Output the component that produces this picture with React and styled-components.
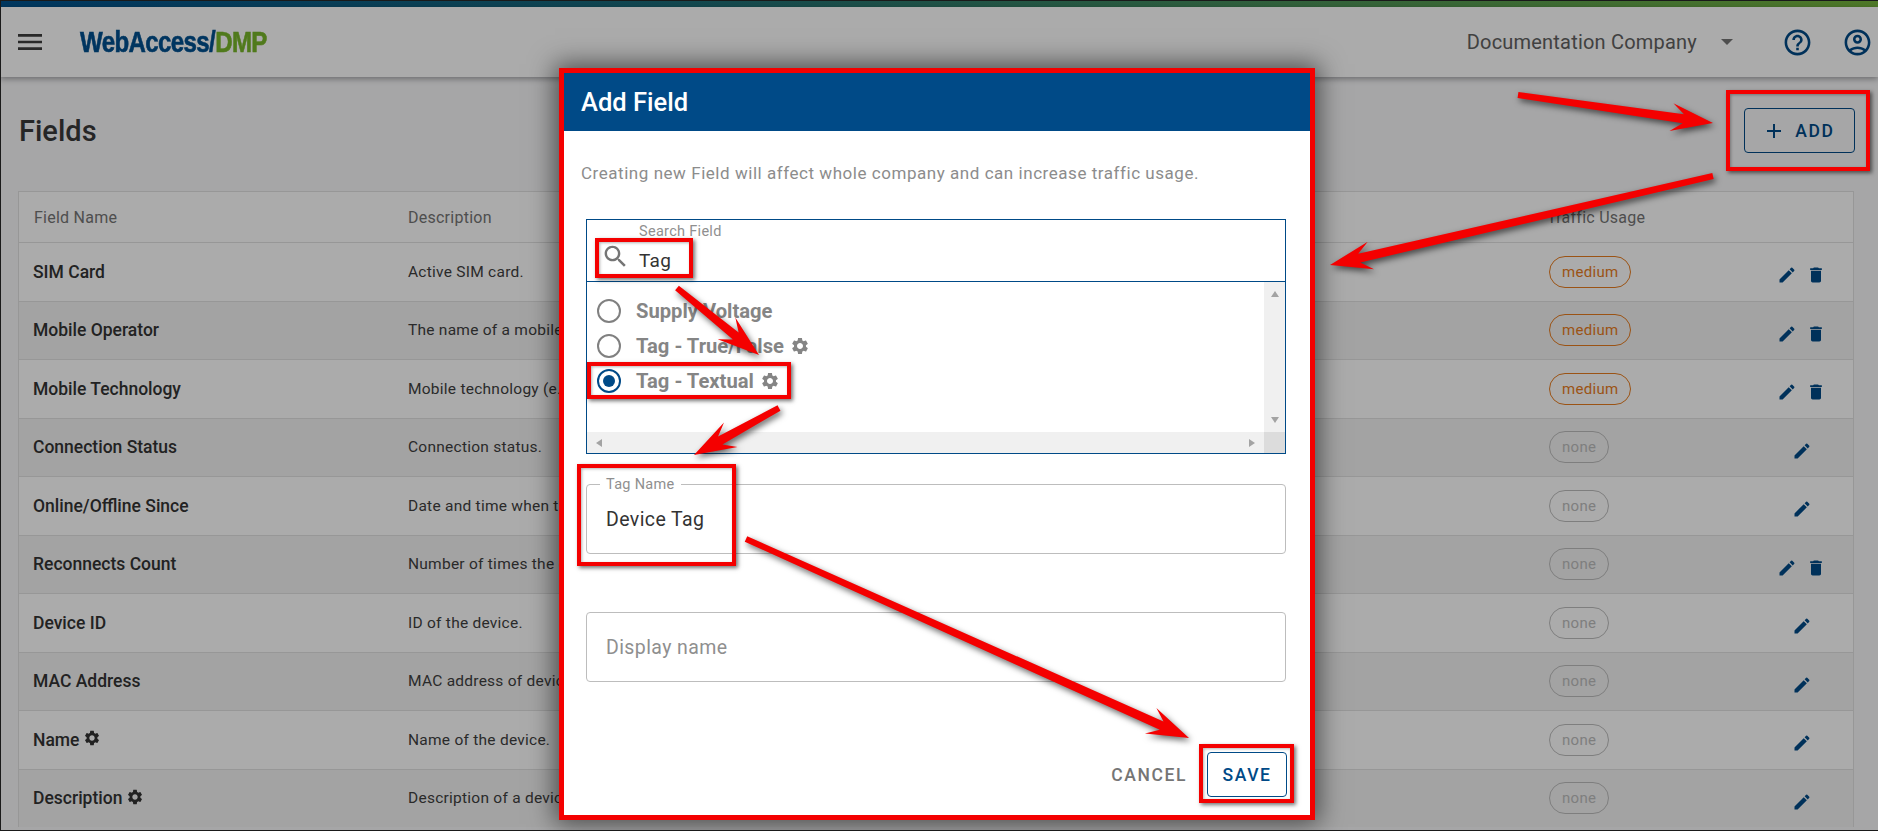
import React from 'react';
import styled, { createGlobalStyle } from 'styled-components';

const Global = createGlobalStyle`
  html, body { margin: 0; padding: 0; background: #f8f8fa; overflow: hidden; }
  * { box-sizing: border-box; }
  body { font-family: Roboto, "Noto Sans", sans-serif; color: #3d3d3d; }
`;

const BLUE = '#004a87';

const Page = styled.div`
  position: relative; width: 1878px; height: 831px; overflow: hidden;
  display: flex; flex-direction: column; background: #f8f8fa;
`;
const Stripe = styled.div`
  height: 7px; flex: none; background: linear-gradient(90deg, #00528f 0%, #1a6a78 35%, #76b53c 100%);
`;
const TopBar = styled.header`
  height: 70px; flex: none; background: #fff; display: flex; align-items: center;
  padding: 0 5.5px 0 14px; box-shadow: 0 2px 6px rgba(0,0,0,.35); position: relative; z-index: 1;
`;
const LogoSlot = styled.div`
  margin-left: 34px; flex: 1;
`;
const Logo = styled.div`
  display: inline-block; transform: scaleX(.83); transform-origin: left center;
  font-family: "Liberation Sans", sans-serif; font-weight: 700; font-size: 29px; letter-spacing: -0.75px;
  color: #00508f; -webkit-text-stroke: .6px currentColor;
  span { color: #78b62a; }
`;
const Company = styled.div`
  font-size: 20px; letter-spacing: .2px; color: #616161;
`;
const Caret = styled.div`
  width: 0; height: 0; margin: 0 48.5px 0 24px; border-left: 6px solid transparent; border-right: 6px solid transparent; border-top: 6px solid #757575;
`;
const IconGroup = styled.div`
  display: flex; gap: 29px; align-items: center; color: ${BLUE};
`;
const Main = styled.main`
  flex: 1; padding: 0 24px 0 18px; min-height: 0;
`;
const TitleRow = styled.div`
  height: 114px; display: flex; align-items: center; justify-content: space-between; padding-bottom: 7px;
`;
const Title = styled.h1`
  margin: 0 0 0 1px; font-size: 29px; font-weight: 500; color: #3a3a3a;
`;
const AddButton = styled.button`
  width: 111px; height: 45px; margin-right: -1px; border: 1px solid ${BLUE}; border-radius: 4px; background: transparent;
  color: ${BLUE}; font: 500 17.5px Roboto, sans-serif; letter-spacing: 1.6px;
  display: flex; align-items: center; justify-content: center; gap: 9px; padding: 0 2px 0 0;
`;
const Table = styled.div`
  border: 1px solid #e2e2e2; border-bottom: none; background: #fff;
`;
const HeadRow = styled.div`
  display: grid; grid-template-columns: 374px 1141px 214px 1fr; align-items: center; height: 50px;
  font-size: 16px; letter-spacing: .25px; color: #757575;
  & > div { padding-left: 15px; }
  & > div:nth-child(3) { padding-left: 13px; }
`;
const Row = styled.div`
  display: grid; grid-template-columns: 374px 1141px 214px 1fr; align-items: center; height: 58.5px;
  border-top: 1px solid #e2e2e2; background: ${p => (p.$alt ? '#f3f3f3' : '#fff')};
  & > div { padding-left: 15px; }
`;
const NameCell = styled.div`
  && { padding-left: 14px; }
  font-size: 17.5px; font-weight: 500; color: #333; display: flex; align-items: center; gap: 4px;
  svg { margin-top: -3px; }
`;
const DescCell = styled.div`
  font-size: 15.5px; letter-spacing: .25px; color: #3f3f3f; white-space: nowrap;
`;
const Chip = styled.span`
  display: inline-flex; align-items: center; justify-content: center; height: 32px; border-radius: 16px;
  padding: 0 12px; font-size: 15px; letter-spacing: .3px;
  border: 1px solid ${p => (p.$tone === 'medium' ? '#e87c1e' : '#bdbdbd')};
  color: ${p => (p.$tone === 'medium' ? '#e87c1e' : '#bdbdbd')};
`;
const Actions = styled.div`
  && { padding-left: 2px; } display: flex; align-items: center; justify-content: center; gap: 9px; color: #004a87; padding-top: 7px;
`;
const Backdrop = styled.div`
  position: absolute; inset: 0; background: rgba(0,0,0,.33); z-index: 2;
`;
const Modal = styled.section`
  position: absolute; left: 559px; top: 68px; width: 756px; height: 752px; z-index: 3;
  border: 5px solid #f40000; background: #fff; display: flex; flex-direction: column;
  box-shadow: 0 0 24px 4px rgba(0,0,0,.55);
`;
const ModalHead = styled.div`
  height: 58px; flex: none; background: ${BLUE}; color: #fff; display: flex; align-items: center;
  padding-left: 17px; font-size: 25.5px; font-weight: 500;
`;
const ModalBody = styled.div`
  padding: 0 24px 0 17px; display: flex; flex-direction: column;
`;
const Note = styled.p`
  margin: 30px 0 0; font-size: 17px; line-height: 24px; letter-spacing: .54px; color: #8c8c8c;
`;
const Form = styled.div`
  margin: 34px 0 0 5px; display: flex; flex-direction: column;
`;
const ListBox = styled.div`
  height: 235px; border: 1px solid ${BLUE}; display: flex; flex-direction: column;
`;
const SearchRow = styled.div`
  height: 62px; flex: none; border-bottom: 1px solid ${BLUE}; display: flex; align-items: flex-end;
  padding: 0 0 5px 14px; color: #757575; gap: 9px;
`;
const SearchText = styled.div`
  display: flex; flex-direction: column; padding-bottom: 2px;
`;
const SearchLabel = styled.span`
  font-size: 14.5px; line-height: 16px; letter-spacing: .3px; color: #8f8f8f;
`;
const SearchValue = styled.span`
  font-size: 19px; line-height: 26px; letter-spacing: .3px; color: #333; margin-top: 8px;
`;
const ListArea = styled.div`
  flex: 1; display: grid; grid-template-columns: 1fr 21px; grid-template-rows: 1fr 21px; min-height: 0;
`;
const Options = styled.div`
  padding: 11px 0 0 10px; display: flex; flex-direction: column;
`;
const Option = styled.div`
  height: 35px; display: flex; align-items: center; gap: 15px; font-size: 20.2px; font-weight: 700;
  color: #858585;
  svg { margin-left: -9px; }
`;
const Radio = styled.span`
  width: 24px; height: 24px; border-radius: 50%; flex: none; border: 2px solid ${p => (p.$on ? BLUE : '#808080')};
  display: flex; align-items: center; justify-content: center;
  &::after { content: ''; width: 12px; height: 12px; border-radius: 50%; background: ${p => (p.$on ? BLUE : 'transparent')}; }
`;
const VBar = styled.div`
  background: #f0f0f0; display: flex; flex-direction: column; justify-content: space-between; align-items: center; padding: 9px 0;
`;
const HBar = styled.div`
  background: #f0f0f0; display: flex; justify-content: space-between; align-items: center; padding: 0 9px;
`;
const Corner = styled.div`
  background: #dcdcdc;
`;
const Tri = styled.span`
  width: 0; height: 0; border: 4.5px solid transparent;
  ${p => p.$dir === 'up' && 'border-bottom: 6px solid #a3a3a3; border-top: none;'}
  ${p => p.$dir === 'down' && 'border-top: 6px solid #a3a3a3; border-bottom: none;'}
  ${p => p.$dir === 'left' && 'border-right: 6px solid #a3a3a3; border-left: none;'}
  ${p => p.$dir === 'right' && 'border-left: 6px solid #a3a3a3; border-right: none;'}
`;
const Outlined = styled.div`
  position: relative; height: 70px; border: 1px solid #bdbdbd; border-radius: 4px; display: flex; align-items: center;
  padding-left: 19px; margin-top: ${p => p.$gap}px; font-size: 19.5px; letter-spacing: .4px;
  color: ${p => (p.$muted ? '#8f8f8f' : '#333')};
`;
const Notch = styled.span`
  position: absolute; left: 13px; top: -8px; padding: 0 6px; background: #fff; font-size: 14.5px; line-height: 16px;
  letter-spacing: .3px; color: #8f8f8f;
`;
const Footer = styled.div`
  margin: 70px -1px 0 0; height: 45px; display: flex; justify-content: flex-end; align-items: center; gap: 20px;
`;
const Cancel = styled.span`
  font-size: 17.5px; font-weight: 500; letter-spacing: 1.6px; color: #757575;
`;
const Save = styled.button`
  width: 80px; height: 45px; border: 1px solid ${BLUE}; border-radius: 4px; background: #fff; color: ${BLUE};
  font: 500 17.5px Roboto, sans-serif; letter-spacing: 1.6px; padding: 0;
`;
const Callout = styled.div`
  position: absolute; z-index: 4; left: ${p => p.$x}px; top: ${p => p.$y}px; width: ${p => p.$w}px; height: ${p => p.$h}px;
  border: 4.5px solid #f40000; box-shadow: 2px 2px 4px rgba(0,0,0,.55), inset 1px 1px 3px rgba(0,0,0,.3);
`;
const ArrowLayer = styled.svg`
  position: absolute; inset: 0; z-index: 5; width: 1878px; height: 831px; pointer-events: none;
  filter: drop-shadow(2px 3px 3px rgba(0,0,0,.6));
`;
const Frame = styled.div`
  position: absolute; inset: 0; z-index: 6; border: 1px solid #1a1a1a; border-right: none; pointer-events: none;
`;

const Icon = ({ d, size = 24, style }) => (
  <svg width={size} height={size} viewBox="0 0 24 24" fill="currentColor" style={style}><path d={d} /></svg>
);
const P = {
  menu: 'M3 18h18v-2H3v2zm0-5h18v-2H3v2zm0-7v2h18V6H3z',
  edit: 'M3 17.25V21h3.75L17.81 9.94l-3.75-3.75L3 17.25zM20.71 7.04c.39-.39.39-1.02 0-1.41l-2.34-2.34a.9959.9959 0 0 0-1.41 0l-1.83 1.83 3.75 3.75 1.83-1.83z',
  del: 'M6 19c0 1.1.9 2 2 2h8c1.1 0 2-.9 2-2V7H6v12zM19 4h-3.5l-1-1h-5l-1 1H5v2h14V4z',
  gear: 'M19.14 12.94c.04-.3.06-.61.06-.94 0-.32-.02-.64-.07-.94l2.03-1.58c.18-.14.23-.41.12-.61l-1.92-3.32c-.12-.22-.37-.29-.59-.22l-2.39.96c-.5-.38-1.03-.7-1.62-.94l-.36-2.54c-.04-.24-.24-.41-.48-.41h-3.84c-.24 0-.43.17-.47.41l-.36 2.54c-.59.24-1.13.57-1.62.94l-2.39-.96c-.22-.08-.47 0-.59.22L2.74 8.87c-.12.21-.08.47.12.61l2.03 1.58c-.05.3-.09.63-.09.94s.02.64.07.94l-2.03 1.58c-.18.14-.23.41-.12.61l1.92 3.32c.12.22.37.29.59.22l2.39-.96c.5.38 1.03.7 1.62.94l.36 2.54c.05.24.24.41.48.41h3.84c.24 0 .44-.17.47-.41l.36-2.54c.59-.24 1.13-.56 1.62-.94l2.39.96c.22.08.47 0 .59-.22l1.92-3.32c.12-.22.07-.47-.12-.61l-2.01-1.58zM12 15.6c-1.98 0-3.6-1.62-3.6-3.6s1.62-3.6 3.6-3.6 3.6 1.62 3.6 3.6-1.62 3.6-3.6 3.6z',
  search: 'M15.5 14h-.79l-.28-.27C15.41 12.59 16 11.11 16 9.5 16 5.91 13.09 3 9.5 3S3 5.91 3 9.5 5.91 16 9.5 16c1.61 0 3.09-.59 4.23-1.57l.27.28v.79l5 4.99L20.49 19l-4.99-5zm-6 0C7.01 14 5 11.99 5 9.5S7.01 5 9.5 5 14 7.01 14 9.5 11.99 14 9.5 14z',
  help: 'M11 18h2v-2h-2v2zm1-16C6.48 2 2 6.48 2 12s4.48 10 10 10 10-4.48 10-10S17.52 2 12 2zm0 18c-4.41 0-8-3.59-8-8s3.59-8 8-8 8 3.59 8 8-3.59 8-8 8zm0-14c-2.21 0-4 1.79-4 4h2c0-1.1.9-2 2-2s2 .9 2 2c0 2-3 1.75-3 5h2c0-2.25 3-2.5 3-5 0-2.21-1.79-4-4-4z',
  account: 'M12 2C6.48 2 2 6.48 2 12s4.48 10 10 10 10-4.48 10-10S17.52 2 12 2zM7.35 18.5C8.66 17.56 10.26 17 12 17s3.34.56 4.65 1.5c-1.31.94-2.91 1.5-4.65 1.5s-3.34-.56-4.65-1.5zm10.79-1.38C16.45 15.8 14.32 15 12 15s-4.45.8-6.14 2.12C4.7 15.73 4 13.95 4 12c0-4.42 3.58-8 8-8s8 3.58 8 8c0 1.95-.7 3.73-1.86 5.12zM12 6c-1.93 0-3.5 1.57-3.5 3.5S10.07 13 12 13s3.5-1.57 3.5-3.5S13.93 6 12 6zm0 5c-.83 0-1.5-.67-1.5-1.5S11.17 8 12 8s1.5.67 1.5 1.5S12.83 11 12 11z',
  plus: 'M19 13h-6v6h-2v-6H5v-2h6V5h2v6h6v2z',
};

const rows = [
  ['SIM Card', 'Active SIM card.', 'medium', true, false],
  ['Mobile Operator', 'The name of a mobile operator.', 'medium', true, false],
  ['Mobile Technology', 'Mobile technology (e.g. LTE).', 'medium', true, false],
  ['Connection Status', 'Connection status.', 'none', false, false],
  ['Online/Offline Since', 'Date and time when the device changed status.', 'none', false, false],
  ['Reconnects Count', 'Number of times the device reconnected.', 'none', true, false],
  ['Device ID', 'ID of the device.', 'none', false, false],
  ['MAC Address', 'MAC address of device.', 'none', false, false],
  ['Name', 'Name of the device.', 'none', false, true],
  ['Description', 'Description of a device.', 'none', false, true],
];

const arrowPoints = (x1, y1, x2, y2) => {
  const L = Math.hypot(x2 - x1, y2 - y1);
  const ux = (x2 - x1) / L, uy = (y2 - y1) / L, nx = -uy, ny = ux;
  const at = (back, side) => `${x2 - ux * back + nx * side},${y2 - uy * back + ny * side}`;
  const atTail = side => `${x1 + nx * side},${y1 + ny * side}`;
  return [atTail(-3), at(30, -4.5), at(42, -14), at(0, 0), at(42, 14), at(30, 4.5), atTail(3)].join(' ');
};
const arrows = [
  [1518, 95, 1713, 123],
  [1713, 176, 1330, 265],
  [677, 288, 759, 355],
  [779, 408, 694, 455],
  [746, 539, 1189, 738],
];
const callouts = [
  [1726, 90, 144, 81],
  [595, 238, 98, 40],
  [587, 362, 204, 37],
  [577, 464, 159, 102],
  [1199, 744, 95, 59],
];

export default function App() {
  return (
    <Page>
      <Global />
      <Stripe />
      <TopBar>
        <Icon d={P.menu} size={32} />
        <LogoSlot><Logo>WebAccess/<span>DMP</span></Logo></LogoSlot>
        <Company>Documentation Company</Company>
        <Caret />
        <IconGroup>
          <Icon d={P.help} size={31} />
          <Icon d={P.account} size={31} />
        </IconGroup>
      </TopBar>
      <Main>
        <TitleRow>
          <Title>Fields</Title>
          <AddButton><Icon d={P.plus} size={24} />ADD</AddButton>
        </TitleRow>
        <Table>
          <HeadRow>
            <div>Field Name</div><div>Description</div><div>Traffic Usage</div><div />
          </HeadRow>
          {rows.map(([name, desc, traffic, canDelete, gear], i) => (
            <Row key={name} $alt={i % 2 === 1}>
              <NameCell>{name}{gear && <Icon d={P.gear} size={18} />}</NameCell>
              <DescCell>{desc}</DescCell>
              <div><Chip $tone={traffic}>{traffic}</Chip></div>
              <Actions>
                <Icon d={P.edit} size={20} />
                {canDelete && <Icon d={P.del} size={20} />}
              </Actions>
            </Row>
          ))}
        </Table>
      </Main>
      <Backdrop />
      <Modal>
        <ModalHead>Add Field</ModalHead>
        <ModalBody>
          <Note>Creating new Field will affect whole company and can increase traffic usage.</Note>
          <Form>
            <ListBox>
              <SearchRow>
                <Icon d={P.search} size={29} style={{ marginBottom: 5 }} />
                <SearchText>
                  <SearchLabel>Search Field</SearchLabel>
                  <SearchValue>Tag</SearchValue>
                </SearchText>
              </SearchRow>
              <ListArea>
                <Options>
                  <Option><Radio />Supply Voltage</Option>
                  <Option><Radio />Tag - True/False<Icon d={P.gear} size={20} /></Option>
                  <Option><Radio $on />Tag - Textual<Icon d={P.gear} size={20} /></Option>
                </Options>
                <VBar><Tri $dir="up" /><Tri $dir="down" /></VBar>
                <HBar><Tri $dir="left" /><Tri $dir="right" /></HBar>
                <Corner />
              </ListArea>
            </ListBox>
            <Outlined $gap={30}><Notch>Tag Name</Notch>Device Tag</Outlined>
            <Outlined $gap={58} $muted>Display name</Outlined>
            <Footer>
              <Cancel>CANCEL</Cancel>
              <Save>SAVE</Save>
            </Footer>
          </Form>
        </ModalBody>
      </Modal>
      {callouts.map(([x, y, w, h]) => <Callout key={`${x}-${y}`} $x={x} $y={y} $w={w} $h={h} />)}
      <ArrowLayer viewBox="0 0 1878 831">
        {arrows.map(a => <polygon key={a.join()} points={arrowPoints(...a)} fill="#f40000" />)}
      </ArrowLayer>
      <Frame />
    </Page>
  );
}
